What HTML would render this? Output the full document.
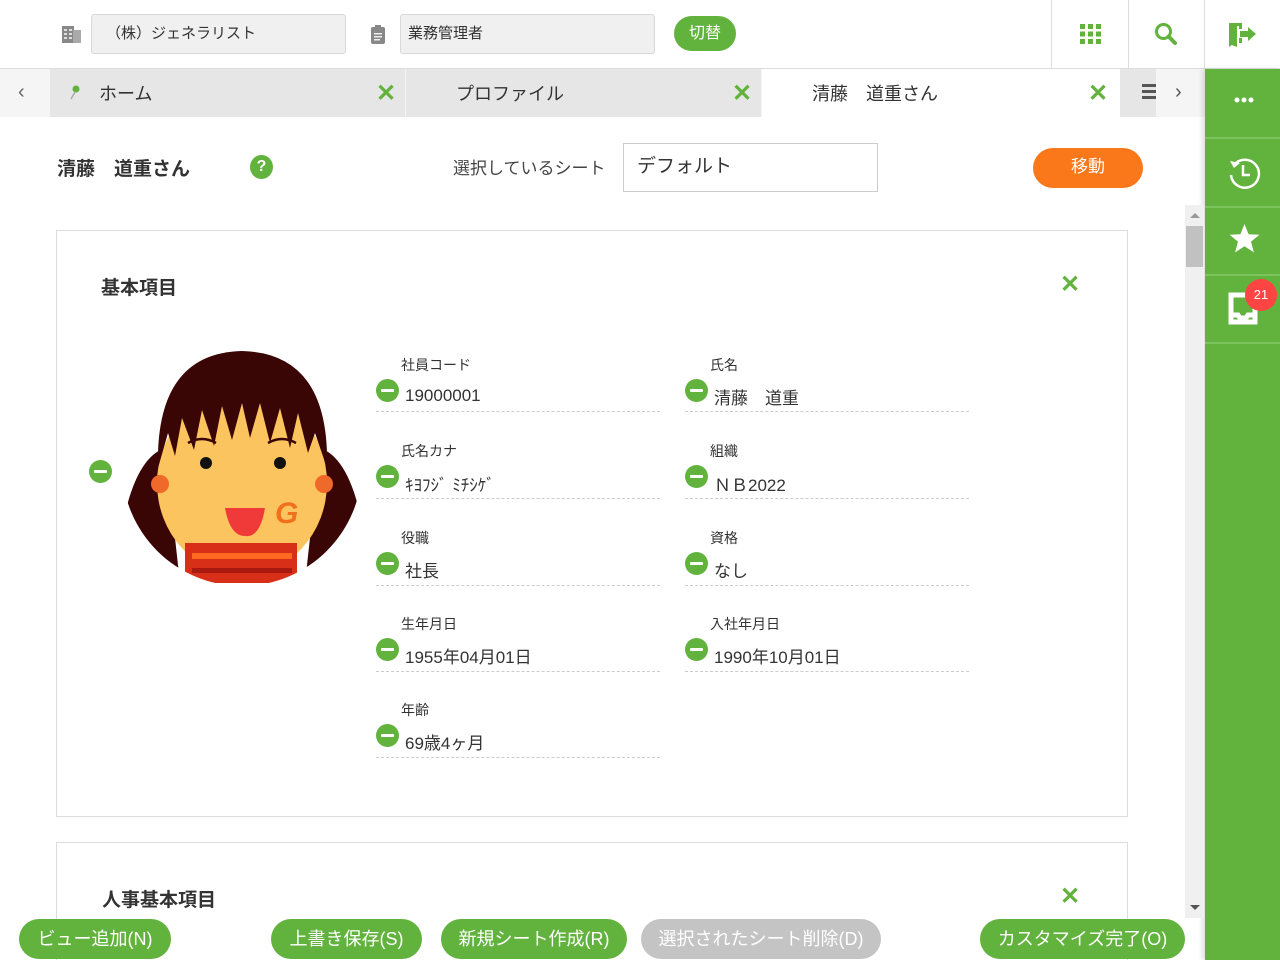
<!DOCTYPE html>
<html style="overflow:hidden;height:960px"><head><meta charset="utf-8"><style>
*{box-sizing:border-box;margin:0;padding:0}
body{width:1280px;height:960px;overflow:hidden;background:#fff;font-family:"Liberation Sans","Noto Sans CJK JP",sans-serif;color:#333;position:relative}
.abs{position:absolute}
.inp{position:absolute;background:#f0f0f0;border:1px solid #d8d8d8;border-radius:3px;font-size:15px;color:#333;padding-left:14px;line-height:38px}
.btn{position:absolute;background:#62b23e;color:#fff;border-radius:20px;text-align:center;font-size:18px;line-height:40px;height:40px}
.tab{position:absolute;top:69px;height:48px;background:#e6e6e6;font-size:18px;line-height:50px;color:#333}
.x{position:absolute;color:#62b23e;font-weight:bold;font-size:24px}
.sb{position:absolute;left:1205px;width:75px;border-bottom:2px solid #7cc45c}
.lbl{position:absolute;font-size:14px;color:#333}
.val{position:absolute;font-size:17px;color:#333}
.ln{position:absolute;height:0;border-top:1px dashed #ccc;width:284px}
.mi{position:absolute;width:23px;height:23px;border-radius:50%;background:#62b23e}
.mi:after{content:"";position:absolute;left:5px;top:10px;width:13px;height:3px;background:#fff;border-radius:1px}
</style></head><body>
<div class="abs" style="left:0;top:0;width:1280px;height:69px;border-bottom:1px solid #ddd"></div>
<svg class="abs" style="left:62px;top:24px" width="20" height="20"><rect x="0" y="2" width="12" height="17" fill="#888"/><rect x="11" y="6" width="8" height="13" fill="#aaa"/><g fill="#ddd"><rect x="2" y="5" width="3" height="2"/><rect x="7" y="5" width="3" height="2"/><rect x="2" y="9" width="3" height="2"/><rect x="7" y="9" width="3" height="2"/><rect x="2" y="13" width="3" height="2"/><rect x="7" y="13" width="3" height="2"/></g></svg>
<div class="inp" style="left:91px;top:14px;width:255px;height:40px">（株）ジェネラリスト</div>
<svg class="abs" style="left:371px;top:25px" width="14" height="19"><rect x="0" y="2" width="14" height="17" rx="2" fill="#888"/><rect x="4" y="0" width="6" height="4" fill="#888"/><g fill="#eee"><rect x="3" y="8" width="8" height="1.5"/><rect x="3" y="11" width="8" height="1.5"/><rect x="3" y="14" width="6" height="1.5"/></g></svg>
<div class="inp" style="left:400px;top:14px;width:255px;height:40px;padding-left:7px">業務管理者</div>
<div class="btn" style="left:674px;top:16px;width:62px;height:35px;line-height:35px;font-size:16px">切替</div>
<div class="abs" style="left:1051px;top:0;width:1px;height:68px;background:#ddd"></div>
<div class="abs" style="left:1128px;top:0;width:1px;height:68px;background:#ddd"></div>
<div class="abs" style="left:1204px;top:0;width:1px;height:68px;background:#ddd"></div>
<svg class="abs" style="left:1080px;top:24px" width="21" height="20" fill="#62b23e"><rect x="0" y="0" width="5" height="5"/><rect x="8" y="0" width="5" height="5"/><rect x="16" y="0" width="5" height="5"/><rect x="0" y="7.5" width="5" height="5"/><rect x="8" y="7.5" width="5" height="5"/><rect x="16" y="7.5" width="5" height="5"/><rect x="0" y="15" width="5" height="5"/><rect x="8" y="15" width="5" height="5"/><rect x="16" y="15" width="5" height="5"/></svg>
<svg class="abs" style="left:1154px;top:22px" width="24" height="24"><circle cx="9.5" cy="9.5" r="7" fill="none" stroke="#62b23e" stroke-width="3"/><line x1="14.5" y1="14.5" x2="21" y2="21" stroke="#62b23e" stroke-width="4" stroke-linecap="round"/></svg>
<svg class="abs" style="left:1229px;top:22px" width="28" height="25" fill="#62b23e"><path d="M0 1 H13 V7 H10 V4 H4 V22 L0 25 Z"/><path d="M0 1 L8 4 V25 L0 22Z"/><path d="M10 16 V21 H13 V16Z"/><path d="M11 9 H19 V5 L27 12 L19 19 V15 H11Z"/></svg>
<div class="abs" style="left:0;top:69px;width:1205px;height:48px;background:#f5f5f5"></div>
<div class="abs" style="left:18px;top:81px;font-size:20px;color:#666">‹</div>
<div class="tab" style="left:50px;width:355px;padding-left:49px"><svg class="abs" style="left:20px;top:16px" width="10" height="15"><circle cx="6" cy="4" r="3.5" fill="#62b23e"/><line x1="5" y1="7" x2="1" y2="14" stroke="#aaa" stroke-width="1.5"/></svg>ホーム<span class="x" style="left:326px;top:0">✕</span></div>
<div class="tab" style="left:406px;width:355px;padding-left:50px">プロファイル<span class="x" style="left:326px;top:0">✕</span></div>
<div class="tab" style="left:762px;width:358px;background:#fff;padding-left:50px">清藤　道重さん<span class="x" style="left:326px;top:0">✕</span></div>
<div class="abs" style="left:1120px;top:69px;width:36px;height:48px;background:#e6e6e6"></div>
<svg class="abs" style="left:1142px;top:84px" width="14" height="16" fill="#555"><rect y="0" width="14" height="3"/><rect y="6" width="14" height="3"/><rect y="12" width="14" height="3"/></svg>
<div class="abs" style="left:1175px;top:81px;font-size:20px;color:#555">›</div>
<div class="abs" style="left:1205px;top:69px;width:75px;height:891px;background:#62b23e;box-shadow:-3px 0 4px rgba(0,0,0,0.12)"></div>
<div class="sb" style="top:69px;height:70px"></div>
<div class="sb" style="top:139px;height:69px"></div>
<div class="sb" style="top:208px;height:68px"></div>
<div class="sb" style="top:276px;height:68px"></div>
<svg class="abs" style="left:1234px;top:97px" width="20" height="6" fill="#fff"><circle cx="3" cy="3" r="2.5"/><circle cx="10" cy="3" r="2.5"/><circle cx="17" cy="3" r="2.5"/></svg>
<svg class="abs" style="left:1226px;top:155px" width="36" height="36" fill="none" stroke="#fff" stroke-width="2.5"><path d="M8 10 A14 14 0 1 1 5 20"/><path d="M4 6 L8 13 L14 8Z" fill="#fff" stroke="none"/><path d="M17 10 V20 H24"/></svg>
<svg class="abs" style="left:1229px;top:223px" width="31" height="31" fill="#fff"><path d="M15.5 1 L19.6 11.3 L30.5 11.8 L22 18.6 L24.9 29.4 L15.5 23.3 L6.1 29.4 L9 18.6 L0.5 11.8 L11.4 11.3Z"/></svg>
<svg class="abs" style="left:1228px;top:292px" width="34" height="34" fill="none"><path d="M3 3 H27 V30 H3Z M3 23 H10 L12 26 H18 L20 23 H27" stroke="#fff" stroke-width="5"/></svg>
<div class="abs" style="left:1245px;top:279px;width:32px;height:32px;border-radius:50%;background:#f44;color:#fff;font-size:13px;text-align:center;line-height:32px">21</div>
<div class="abs" style="left:57px;top:154px;font-size:19px;font-weight:bold;color:#333">清藤　道重さん</div>
<div class="abs" style="left:250px;top:155px;width:23px;height:24px;border-radius:50%;background:#62b23e;color:#fff;font-weight:bold;font-size:16px;text-align:center;line-height:24px">?</div>
<div class="abs" style="left:453px;top:154px;font-size:17px;color:#444">選択しているシート</div>
<div class="abs" style="left:623px;top:143px;width:255px;height:49px;border:1px solid #ccc;font-size:19px;line-height:46px;padding-left:13px;color:#333">デフォルト</div>
<div class="abs" style="left:1033px;top:148px;width:110px;height:40px;border-radius:20px;background:#fa7819;color:#fff;text-align:center;line-height:38px;font-size:17px">移動</div>
<div class="abs" style="left:1185px;top:205px;width:19px;height:713px;background:#f0f0f0"></div>
<div class="abs" style="left:1190px;top:213px;border:5px solid transparent;border-bottom:5px solid #999;border-top:0"></div>
<div class="abs" style="left:1186px;top:226px;width:17px;height:41px;background:#c1c1c1"></div>
<div class="abs" style="left:1190px;top:905px;border:5px solid transparent;border-top:5px solid #555;border-bottom:0"></div>
<div class="abs" style="left:56px;top:230px;width:1072px;height:587px;border:1px solid #ddd"></div>
<div class="abs" style="left:101px;top:273px;font-size:19px;font-weight:bold;color:#333">基本項目</div>
<div class="x" style="left:1060px;top:270px">✕</div>
<div class="mi" style="left:89px;top:460px"></div>
<svg class="abs" style="left:120px;top:348px" width="245" height="235" viewBox="0 0 245 235">
<defs><clipPath id="c"><circle cx="122" cy="118" r="120"/></clipPath></defs>
<g clip-path="url(#c)">
<path d="M2 180 Q15 110 45 100 L60 235 H0Z" fill="#3a0505"/>
<path d="M243 180 Q230 110 200 100 L185 235 H245Z" fill="#3a0505"/>
<ellipse cx="122" cy="135" rx="85" ry="92" fill="#fcc45e"/>
<path d="M38 120 Q35 5 122 3 Q210 5 207 120 L195 85 L188 105 L178 65 L170 100 L160 60 L150 95 L140 55 L130 90 L122 55 L112 92 L102 58 L94 98 L82 62 L74 102 L62 70 L55 108 L48 85Z" fill="#3a0505"/>
<circle cx="40" cy="136" r="9" fill="#ef6a2a"/><circle cx="204" cy="136" r="9" fill="#ef6a2a"/>
<circle cx="86" cy="115" r="6" fill="#111"/><circle cx="160" cy="115" r="6" fill="#111"/>
<path d="M68 95 Q82 87 96 95 M148 95 Q162 87 176 95" stroke="#3a0505" stroke-width="2.5" fill="none"/>
<path d="M105 160 H145 Q140 190 125 188 Q110 188 105 160Z" fill="#f03a3a"/>
<text x="155" y="175" font-size="30" font-weight="bold" font-style="italic" fill="#f0701c" font-family="Liberation Sans,sans-serif">G</text>
<rect x="65" y="195" width="112" height="45" fill="#d83018"/>
<rect x="72" y="205" width="100" height="6" fill="#ff6a20"/><rect x="72" y="220" width="100" height="5" fill="#a81a10"/>
</g></svg>
<div class="lbl" style="left:401px;top:355px">社員コード</div><div class="mi" style="left:376px;top:379px"></div><div class="val" style="left:405px;top:386px">19000001</div><div class="ln" style="left:376px;top:411px"></div>
<div class="lbl" style="left:710px;top:355px">氏名</div><div class="mi" style="left:685px;top:379px"></div><div class="val" style="left:714px;top:384px">清藤　道重</div><div class="ln" style="left:685px;top:411px"></div>
<div class="lbl" style="left:401px;top:441px">氏名カナ</div><div class="mi" style="left:376px;top:465px"></div><div class="val" style="left:405px;top:471px">ｷﾖﾌｼﾞ ﾐﾁｼｹﾞ</div><div class="ln" style="left:376px;top:498px"></div>
<div class="lbl" style="left:710px;top:441px">組織</div><div class="mi" style="left:685px;top:465px"></div><div class="val" style="left:714px;top:471px">ＮＢ2022</div><div class="ln" style="left:685px;top:498px"></div>
<div class="lbl" style="left:401px;top:528px">役職</div><div class="mi" style="left:376px;top:552px"></div><div class="val" style="left:405px;top:557px">社長</div><div class="ln" style="left:376px;top:585px"></div>
<div class="lbl" style="left:710px;top:528px">資格</div><div class="mi" style="left:685px;top:552px"></div><div class="val" style="left:714px;top:557px">なし</div><div class="ln" style="left:685px;top:585px"></div>
<div class="lbl" style="left:401px;top:614px">生年月日</div><div class="mi" style="left:376px;top:638px"></div><div class="val" style="left:405px;top:643px">1955年04月01日</div><div class="ln" style="left:376px;top:671px"></div>
<div class="lbl" style="left:710px;top:614px">入社年月日</div><div class="mi" style="left:685px;top:638px"></div><div class="val" style="left:714px;top:643px">1990年10月01日</div><div class="ln" style="left:685px;top:671px"></div>
<div class="lbl" style="left:401px;top:700px">年齢</div><div class="mi" style="left:376px;top:724px"></div><div class="val" style="left:405px;top:729px">69歳4ヶ月</div><div class="ln" style="left:376px;top:757px"></div>
<div class="abs" style="left:56px;top:842px;width:1072px;height:118px;border:1px solid #ddd;border-bottom:0"></div>
<div class="abs" style="left:102px;top:885px;font-size:19px;font-weight:bold;color:#333">人事基本項目</div>
<div class="x" style="left:1060px;top:882px">✕</div>
<div class="btn" style="left:19px;top:919px;width:152px">ビュー追加(N)</div>
<div class="btn" style="left:271px;top:919px;width:151px">上書き保存(S)</div>
<div class="btn" style="left:441px;top:919px;width:186px">新規シート作成(R)</div>
<div class="btn" style="left:641px;top:919px;width:240px;background:#c4c4c4">選択されたシート削除(D)</div>
<div class="btn" style="left:980px;top:919px;width:205px">カスタマイズ完了(O)</div>
</body></html>
